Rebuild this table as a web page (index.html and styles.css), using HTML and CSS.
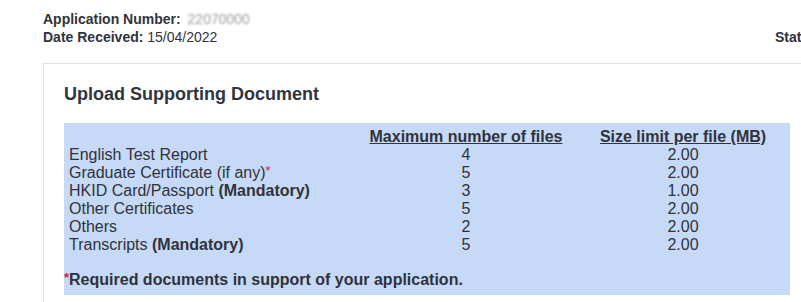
FILE: index.html
```html
<!DOCTYPE html>
<html>
<head>
<meta charset="utf-8">
<link rel="stylesheet" href="styles.css">
</head>
<body>
<div class="page">
  <div class="meta">
    <div class="meta-row"><span class="lbl">Application Number:</span> <span class="blur">22070000</span></div>
    <div class="meta-row split">
      <div class="left"><span class="lbl">Date Received:</span> 15/04/2022</div>
      <div class="status"><span class="lbl">Status:</span> Submitted</div>
    </div>
  </div>
  <div class="card">
    <h2 class="title">Upload Supporting Document</h2>
    <div class="box">
      <div class="grid">
        <div></div>
        <div class="hd c2">Maximum number of files</div>
        <div class="hd c3">Size limit per file (MB)</div>

        <div>English Test Report</div><div class="c2">4</div><div class="c3">2.00</div>
        <div>Graduate Certificate (if any)<span class="req">*</span></div><div class="c2">5</div><div class="c3">2.00</div>
        <div>HKID Card/Passport <b>(Mandatory)</b></div><div class="c2">3</div><div class="c3">1.00</div>
        <div>Other Certificates</div><div class="c2">5</div><div class="c3">2.00</div>
        <div>Others</div><div class="c2">2</div><div class="c3">2.00</div>
        <div>Transcripts <b>(Mandatory)</b></div><div class="c2">5</div><div class="c3">2.00</div>
      </div>
      <div class="note"><span class="req">*</span>Required documents in support of your application.</div>
    </div>
  </div>
</div>
</body>
</html>
```

FILE: styles.css
```css
html, body {
  margin: 0;
  padding: 0;
  background: #fff;
  overflow: hidden;
}
body {
  font-family: "Liberation Sans", Arial, sans-serif;
  color: #2f333d;
}
.page {
  width: 801px;
  height: 302px;
  overflow: hidden;
}
.meta {
  padding: 10px 0 0 43px;
  font-size: 14px;
  line-height: 18px;
  white-space: nowrap;
}
.lbl {
  font-weight: bold;
}
.blur {
  color: #9a9a9a;
  filter: blur(1.2px);
  margin-left: 3px;
}
.split {
  display: flex;
}
.split .left {
  width: 732px;
  flex: none;
}
.card {
  margin: 17px 0 0 43px;
  width: 766px;
  height: 260px;
  border: 1px solid #e2e2e2;
  box-shadow: 0 1px 4px rgba(0, 0, 0, 0.08);
  padding: 19px 20px 0 20px;
  background: #fff;
}
.title {
  margin: 0 0 18px 0;
  font-size: 18px;
  line-height: 22px;
  font-weight: bold;
  color: #2f3542;
}
.box {
  width: 726px;
  background: #c6d9f6;
  padding: 5px 0 6px 0;
  font-size: 16px;
  line-height: 18px;
  color: #30333b;
}
.grid {
  display: grid;
  grid-template-columns: 300px 194px 227px;
  padding-left: 5px;
}
.c2, .c3 {
  text-align: center;
  white-space: nowrap;
}
.c3 {
  padding-left: 13px;
}
.hd {
  font-weight: bold;
  text-decoration: underline;
}
.req {
  color: #d8203f;
  font-size: 13px;
  vertical-align: top;
  line-height: 14px;
}
.note {
  margin-top: 17px;
  font-weight: bold;
  white-space: nowrap;
}
```
